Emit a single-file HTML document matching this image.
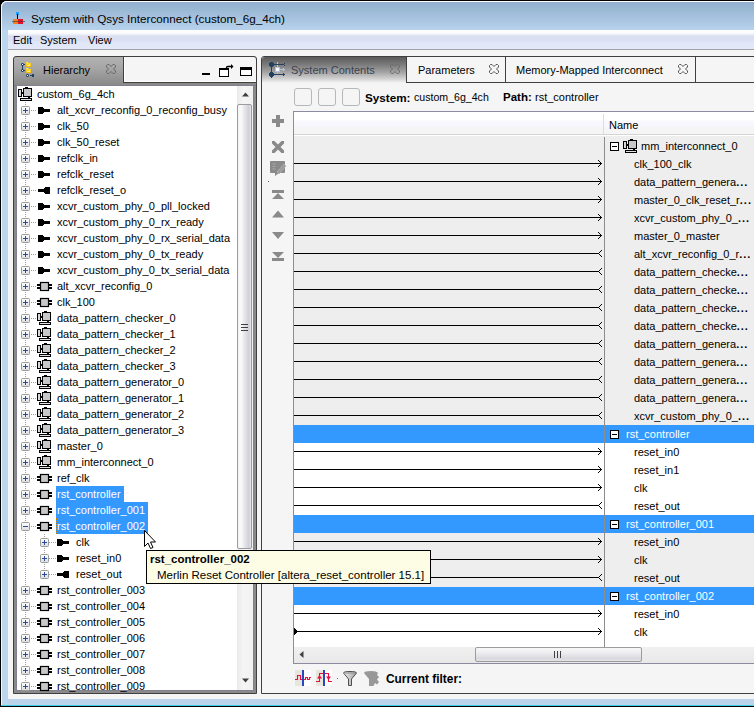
<!DOCTYPE html><html><head><meta charset="utf-8"><style>
*{margin:0;padding:0;box-sizing:border-box}
html,body{width:754px;height:707px;overflow:hidden;background:#f5f5f5;font-family:"Liberation Sans", sans-serif;font-size:11px;color:#000}
.a{position:absolute}
.t{position:absolute;white-space:nowrap;line-height:13px}
svg{position:absolute;overflow:visible}
</style></head><body><div class="a" style="left:0;top:0;width:754px;height:707px;background:#000"></div>
<div class="a" style="left:1px;top:1px;width:753px;height:705px;background:#bcd3ec;border-top-left-radius:6px"></div>
<div class="a" style="left:1px;top:1px;width:6px;height:705px;background:#bcd6ee;border-left:1px solid #f4f8fc;border-top-left-radius:6px"></div>
<div class="a" style="left:1px;top:1px;width:753px;height:29px;background:linear-gradient(#95afd3,#98b8d2 25%,#a2bedc 45%,#abc8e2 70%,#b4d0ea 95%);border-top-left-radius:6px;border-top:1px solid #fff;border-left:1px solid #f4f8fc"></div>
<div class="a" style="left:1px;top:705px;width:753px;height:1px;background:#3fd0e8"></div>
<svg style="left:12px;top:12px" width="14" height="14" viewBox="0 0 14 14">
<rect x="4" y="0" width="3" height="3" fill="#1aa0ff"/><rect x="5" y="2" width="1" height="6" fill="#000"/>
<rect x="1" y="7" width="5" height="5" fill="#f08020"/><rect x="6" y="7" width="5" height="5" fill="#e8102a"/>
<rect x="0" y="9" width="13" height="1" fill="#333" opacity=".6"/></svg>
<div class="t" style="left:31px;top:12px;font-size:11.7px">System with Qsys Interconnect (custom_6g_4ch)</div>
<div class="a" style="left:8px;top:30px;width:746px;height:20px;background:linear-gradient(#ffffff 0px,#fafbfd 3px,#e8ecf6 5px,#d9dff0 6px,#dbe0f2 11px,#e0e6f7 12px,#e3e9f8 19px);border-bottom:1px solid #a0a0a8"></div>
<div class="t" style="left:13px;top:34px">Edit</div>
<div class="t" style="left:40px;top:34px">System</div>
<div class="t" style="left:88px;top:34px">View</div>
<div class="a" style="left:8px;top:50px;width:746px;height:649px;background:#f5f5f5"></div>
<div class="a" style="left:13px;top:56px;width:244px;height:638px;background:#8a8a8a;border:1px solid #404040;border-radius:3px 3px 0 0"></div>
<div class="a" style="left:14px;top:57px;width:110px;height:28px;background:linear-gradient(#b2b2b2,#a6a6a6 40%,#979797 70%,#8a8a8a);border-top-left-radius:3px"></div>
<div class="a" style="left:123px;top:57px;width:133px;height:26px;background:#f5f5f5;border-left:1px solid #404040;border-bottom:1px solid #404040;border-top-right-radius:3px;box-shadow:inset 1px -1px 0 #fff"></div>
<div class="a" style="left:14px;top:85px;width:242px;height:1px;background:#7a7a90"></div>
<div class="t" style="left:43px;top:64px">Hierarchy</div>
<svg style="left:17px;top:59px" width="22" height="22" viewBox="0 0 22 22"><rect x="4" y="5" width="3" height="1" fill="#22405f"/><rect x="5" y="4" width="1" height="3" fill="#22405f"/><rect x="7" y="5" width="1" height="1" fill="#22405f"/><rect x="5" y="7" width="1" height="3" fill="#22405f"/><rect x="4" y="11" width="3" height="1" fill="#22405f"/><rect x="5" y="10" width="1" height="3" fill="#22405f"/><rect x="7" y="11" width="1" height="1" fill="#22405f"/><rect x="9" y="16" width="3" height="1" fill="#22405f"/><rect x="10" y="15" width="1" height="3" fill="#22405f"/><rect x="13" y="16" width="2" height="1" fill="#22405f"/><rect x="15" y="15" width="2" height="3" fill="#22405f"/><g opacity=".45"><rect x="4" y="4" width="1" height="1" fill="#22405f"/><rect x="6" y="4" width="1" height="1" fill="#22405f"/><rect x="4" y="6" width="1" height="1" fill="#22405f"/><rect x="6" y="6" width="1" height="1" fill="#22405f"/><rect x="4" y="10" width="1" height="1" fill="#22405f"/><rect x="6" y="10" width="1" height="1" fill="#22405f"/><rect x="4" y="12" width="1" height="1" fill="#22405f"/><rect x="6" y="12" width="1" height="1" fill="#22405f"/><rect x="9" y="15" width="1" height="1" fill="#22405f"/><rect x="11" y="15" width="1" height="1" fill="#22405f"/><rect x="9" y="17" width="1" height="1" fill="#22405f"/><rect x="11" y="17" width="1" height="1" fill="#22405f"/></g><rect x="5" y="5" width="1" height="1" fill="#fff"/><rect x="5" y="11" width="1" height="1" fill="#fff"/><rect x="10" y="16" width="1" height="1" fill="#fff"/><defs><linearGradient id="fy" x1="0" y1="0" x2="0" y2="1"><stop offset="0" stop-color="#ffe448"/><stop offset="1" stop-color="#f2b400"/></linearGradient></defs><path d="M9 3H11L12 4H14V8H9Z" fill="url(#fy)"/><path d="M9 9H11L12 10H14V14H9Z" fill="url(#fy)"/><rect x="10" y="6" width="3" height="1" fill="#ffec90"/><rect x="12" y="5" width="1" height="1" fill="#ffec90"/><rect x="10" y="12" width="3" height="1" fill="#ffec90"/><rect x="12" y="11" width="1" height="1" fill="#ffec90"/></svg>
<svg style="left:106px;top:64px" width="10" height="10" viewBox="0 0 10 10"><path d="M1.5 0.5H3L5 2.5L7 0.5H8.5L9.5 1.5V3L7.5 5L9.5 7V8.5L8.5 9.5H7L5 7.5L3 9.5H1.5L0.5 8.5V7L2.5 5L0.5 3V1.5Z" fill="none" stroke="#666" stroke-width="1"/></svg>
<div class="a" style="left:202px;top:73px;width:8px;height:2px;background:#000"></div>
<svg style="left:219px;top:63px" width="15" height="14" viewBox="0 0 15 14"><rect x="0.5" y="5.5" width="9" height="8" fill="#fff" stroke="#000"/><rect x="0" y="5" width="10" height="2" fill="#000"/><path d="M7.5 5V4.5Q7.5 3.5 9 3.5H12" stroke="#000" fill="none" stroke-width="1.3"/><path d="M12 1L14.5 3.5L12 6Z" fill="#000"/></svg>
<div class="a" style="left:240px;top:67px;width:12px;height:9px;border:1px solid #000;border-top:3px solid #000;background:#fff"></div>
<div class="a" style="left:16px;top:85px;width:238px;height:606px;border:1px solid #80808e"></div>
<div class="a" style="left:17px;top:86px;width:236px;height:604px;background:#fff"></div>
<div class="a" style="left:237px;top:86px;width:16px;height:604px;background:linear-gradient(90deg,#eaeaea,#f5f5f5 40%,#f0f0f0);"></div>
<svg style="left:242px;top:92px" width="7" height="5" viewBox="0 0 7 5"><path d="M0 4.5L3.5 0.5L7 4.5Z" fill="#404040"/></svg>
<svg style="left:242px;top:678px" width="7" height="5" viewBox="0 0 7 5"><path d="M0 0.5L3.5 4.5L7 0.5Z" fill="#404040"/></svg>
<div class="a" style="left:237px;top:104px;width:15px;height:445px;border:1px solid #9c9c9c;border-radius:2px;background:linear-gradient(90deg,#f5f5f5,#fafafa 25%,#e2e2e8 55%,#cfcfd8 85%,#e8e8ec)"></div>
<div class="a" style="left:241px;top:324px;width:7px;height:7px;background:repeating-linear-gradient(#404040 0 1px,transparent 1px 3px)"></div>
<div class="a" style="left:25px;top:102px;width:1px;height:588px;background:repeating-linear-gradient(#a0a0a0 0 1px,transparent 1px 2px)"></div>
<div class="a" style="left:44px;top:534px;width:1px;height:40px;background:repeating-linear-gradient(#a0a0a0 0 1px,transparent 1px 2px)"></div>
<svg style="left:18px;top:87px" width="14" height="14" viewBox="0 0 14 14"><rect x="0.5" y="2.5" width="3" height="7" fill="#d8d8d8" stroke="#000"/><rect x="4" y="5" width="1" height="2" fill="#000"/><rect x="5.5" y="1.5" width="8" height="8" fill="#c8c8c8" stroke="#000"/><rect x="7" y="0" width="3" height="1.5" fill="#000"/><rect x="10" y="10" width="2" height="1" fill="#000"/><rect x="2.5" y="11.5" width="11" height="2" fill="#e0e0e0" stroke="#000"/></svg>
<div class="t" style="left:37px;top:88px">custom_6g_4ch</div>
<div class="a" style="left:31px;top:110px;width:6px;height:1px;background:repeating-linear-gradient(90deg,#a0a0a0 0 1px,transparent 1px 2px)"></div>
<svg style="left:21px;top:106px" width="9" height="9" viewBox="0 0 9 9"><defs><linearGradient id="pg" x1="0" y1="0" x2="0" y2="1"><stop offset="0" stop-color="#fff"/><stop offset="1" stop-color="#dcdcdc"/></linearGradient></defs><rect x="0.5" y="0.5" width="8" height="8" rx="1" fill="url(#pg)" stroke="#9a9a9a"/><path d="M2 4.5H7" stroke="#2a4aa0"/><path d="M4.5 2V7" stroke="#2a4aa0"/></svg>
<svg style="left:38px;top:107px" width="12" height="7" viewBox="0 0 12 7"><rect x="0" y="0" width="5" height="7" fill="#000"/><rect x="5" y="1" width="1" height="5" fill="#000"/><rect x="6" y="2" width="6" height="3" fill="#000"/></svg>
<div class="t" style="left:57px;top:104px">alt_xcvr_reconfig_0_reconfig_busy</div>
<div class="a" style="left:31px;top:126px;width:6px;height:1px;background:repeating-linear-gradient(90deg,#a0a0a0 0 1px,transparent 1px 2px)"></div>
<svg style="left:21px;top:122px" width="9" height="9" viewBox="0 0 9 9"><defs><linearGradient id="pg" x1="0" y1="0" x2="0" y2="1"><stop offset="0" stop-color="#fff"/><stop offset="1" stop-color="#dcdcdc"/></linearGradient></defs><rect x="0.5" y="0.5" width="8" height="8" rx="1" fill="url(#pg)" stroke="#9a9a9a"/><path d="M2 4.5H7" stroke="#2a4aa0"/><path d="M4.5 2V7" stroke="#2a4aa0"/></svg>
<svg style="left:38px;top:123px" width="12" height="7" viewBox="0 0 12 7"><rect x="0" y="0" width="5" height="7" fill="#000"/><rect x="5" y="1" width="1" height="5" fill="#000"/><rect x="6" y="2" width="6" height="3" fill="#000"/></svg>
<div class="t" style="left:57px;top:120px">clk_50</div>
<div class="a" style="left:31px;top:142px;width:6px;height:1px;background:repeating-linear-gradient(90deg,#a0a0a0 0 1px,transparent 1px 2px)"></div>
<svg style="left:21px;top:138px" width="9" height="9" viewBox="0 0 9 9"><defs><linearGradient id="pg" x1="0" y1="0" x2="0" y2="1"><stop offset="0" stop-color="#fff"/><stop offset="1" stop-color="#dcdcdc"/></linearGradient></defs><rect x="0.5" y="0.5" width="8" height="8" rx="1" fill="url(#pg)" stroke="#9a9a9a"/><path d="M2 4.5H7" stroke="#2a4aa0"/><path d="M4.5 2V7" stroke="#2a4aa0"/></svg>
<svg style="left:38px;top:139px" width="12" height="7" viewBox="0 0 12 7"><rect x="0" y="0" width="5" height="7" fill="#000"/><rect x="5" y="1" width="1" height="5" fill="#000"/><rect x="6" y="2" width="6" height="3" fill="#000"/></svg>
<div class="t" style="left:57px;top:136px">clk_50_reset</div>
<div class="a" style="left:31px;top:158px;width:6px;height:1px;background:repeating-linear-gradient(90deg,#a0a0a0 0 1px,transparent 1px 2px)"></div>
<svg style="left:21px;top:154px" width="9" height="9" viewBox="0 0 9 9"><defs><linearGradient id="pg" x1="0" y1="0" x2="0" y2="1"><stop offset="0" stop-color="#fff"/><stop offset="1" stop-color="#dcdcdc"/></linearGradient></defs><rect x="0.5" y="0.5" width="8" height="8" rx="1" fill="url(#pg)" stroke="#9a9a9a"/><path d="M2 4.5H7" stroke="#2a4aa0"/><path d="M4.5 2V7" stroke="#2a4aa0"/></svg>
<svg style="left:38px;top:155px" width="12" height="7" viewBox="0 0 12 7"><rect x="0" y="0" width="5" height="7" fill="#000"/><rect x="5" y="1" width="1" height="5" fill="#000"/><rect x="6" y="2" width="6" height="3" fill="#000"/></svg>
<div class="t" style="left:57px;top:152px">refclk_in</div>
<div class="a" style="left:31px;top:174px;width:6px;height:1px;background:repeating-linear-gradient(90deg,#a0a0a0 0 1px,transparent 1px 2px)"></div>
<svg style="left:21px;top:170px" width="9" height="9" viewBox="0 0 9 9"><defs><linearGradient id="pg" x1="0" y1="0" x2="0" y2="1"><stop offset="0" stop-color="#fff"/><stop offset="1" stop-color="#dcdcdc"/></linearGradient></defs><rect x="0.5" y="0.5" width="8" height="8" rx="1" fill="url(#pg)" stroke="#9a9a9a"/><path d="M2 4.5H7" stroke="#2a4aa0"/><path d="M4.5 2V7" stroke="#2a4aa0"/></svg>
<svg style="left:38px;top:171px" width="12" height="7" viewBox="0 0 12 7"><rect x="0" y="0" width="5" height="7" fill="#000"/><rect x="5" y="1" width="1" height="5" fill="#000"/><rect x="6" y="2" width="6" height="3" fill="#000"/></svg>
<div class="t" style="left:57px;top:168px">refclk_reset</div>
<div class="a" style="left:31px;top:190px;width:6px;height:1px;background:repeating-linear-gradient(90deg,#a0a0a0 0 1px,transparent 1px 2px)"></div>
<svg style="left:21px;top:186px" width="9" height="9" viewBox="0 0 9 9"><defs><linearGradient id="pg" x1="0" y1="0" x2="0" y2="1"><stop offset="0" stop-color="#fff"/><stop offset="1" stop-color="#dcdcdc"/></linearGradient></defs><rect x="0.5" y="0.5" width="8" height="8" rx="1" fill="url(#pg)" stroke="#9a9a9a"/><path d="M2 4.5H7" stroke="#2a4aa0"/><path d="M4.5 2V7" stroke="#2a4aa0"/></svg>
<svg style="left:38px;top:187px" width="12" height="7" viewBox="0 0 12 7"><rect x="7" y="0" width="5" height="7" fill="#000"/><rect x="6" y="1" width="1" height="5" fill="#000"/><rect x="0" y="2" width="6" height="3" fill="#000"/></svg>
<div class="t" style="left:57px;top:184px">refclk_reset_o</div>
<div class="a" style="left:31px;top:206px;width:6px;height:1px;background:repeating-linear-gradient(90deg,#a0a0a0 0 1px,transparent 1px 2px)"></div>
<svg style="left:21px;top:202px" width="9" height="9" viewBox="0 0 9 9"><defs><linearGradient id="pg" x1="0" y1="0" x2="0" y2="1"><stop offset="0" stop-color="#fff"/><stop offset="1" stop-color="#dcdcdc"/></linearGradient></defs><rect x="0.5" y="0.5" width="8" height="8" rx="1" fill="url(#pg)" stroke="#9a9a9a"/><path d="M2 4.5H7" stroke="#2a4aa0"/><path d="M4.5 2V7" stroke="#2a4aa0"/></svg>
<svg style="left:38px;top:203px" width="12" height="7" viewBox="0 0 12 7"><rect x="0" y="0" width="5" height="7" fill="#000"/><rect x="5" y="1" width="1" height="5" fill="#000"/><rect x="6" y="2" width="6" height="3" fill="#000"/></svg>
<div class="t" style="left:57px;top:200px">xcvr_custom_phy_0_pll_locked</div>
<div class="a" style="left:31px;top:222px;width:6px;height:1px;background:repeating-linear-gradient(90deg,#a0a0a0 0 1px,transparent 1px 2px)"></div>
<svg style="left:21px;top:218px" width="9" height="9" viewBox="0 0 9 9"><defs><linearGradient id="pg" x1="0" y1="0" x2="0" y2="1"><stop offset="0" stop-color="#fff"/><stop offset="1" stop-color="#dcdcdc"/></linearGradient></defs><rect x="0.5" y="0.5" width="8" height="8" rx="1" fill="url(#pg)" stroke="#9a9a9a"/><path d="M2 4.5H7" stroke="#2a4aa0"/><path d="M4.5 2V7" stroke="#2a4aa0"/></svg>
<svg style="left:38px;top:219px" width="12" height="7" viewBox="0 0 12 7"><rect x="0" y="0" width="5" height="7" fill="#000"/><rect x="5" y="1" width="1" height="5" fill="#000"/><rect x="6" y="2" width="6" height="3" fill="#000"/></svg>
<div class="t" style="left:57px;top:216px">xcvr_custom_phy_0_rx_ready</div>
<div class="a" style="left:31px;top:238px;width:6px;height:1px;background:repeating-linear-gradient(90deg,#a0a0a0 0 1px,transparent 1px 2px)"></div>
<svg style="left:21px;top:234px" width="9" height="9" viewBox="0 0 9 9"><defs><linearGradient id="pg" x1="0" y1="0" x2="0" y2="1"><stop offset="0" stop-color="#fff"/><stop offset="1" stop-color="#dcdcdc"/></linearGradient></defs><rect x="0.5" y="0.5" width="8" height="8" rx="1" fill="url(#pg)" stroke="#9a9a9a"/><path d="M2 4.5H7" stroke="#2a4aa0"/><path d="M4.5 2V7" stroke="#2a4aa0"/></svg>
<svg style="left:38px;top:235px" width="12" height="7" viewBox="0 0 12 7"><rect x="0" y="0" width="5" height="7" fill="#000"/><rect x="5" y="1" width="1" height="5" fill="#000"/><rect x="6" y="2" width="6" height="3" fill="#000"/></svg>
<div class="t" style="left:57px;top:232px">xcvr_custom_phy_0_rx_serial_data</div>
<div class="a" style="left:31px;top:254px;width:6px;height:1px;background:repeating-linear-gradient(90deg,#a0a0a0 0 1px,transparent 1px 2px)"></div>
<svg style="left:21px;top:250px" width="9" height="9" viewBox="0 0 9 9"><defs><linearGradient id="pg" x1="0" y1="0" x2="0" y2="1"><stop offset="0" stop-color="#fff"/><stop offset="1" stop-color="#dcdcdc"/></linearGradient></defs><rect x="0.5" y="0.5" width="8" height="8" rx="1" fill="url(#pg)" stroke="#9a9a9a"/><path d="M2 4.5H7" stroke="#2a4aa0"/><path d="M4.5 2V7" stroke="#2a4aa0"/></svg>
<svg style="left:38px;top:251px" width="12" height="7" viewBox="0 0 12 7"><rect x="0" y="0" width="5" height="7" fill="#000"/><rect x="5" y="1" width="1" height="5" fill="#000"/><rect x="6" y="2" width="6" height="3" fill="#000"/></svg>
<div class="t" style="left:57px;top:248px">xcvr_custom_phy_0_tx_ready</div>
<div class="a" style="left:31px;top:270px;width:6px;height:1px;background:repeating-linear-gradient(90deg,#a0a0a0 0 1px,transparent 1px 2px)"></div>
<svg style="left:21px;top:266px" width="9" height="9" viewBox="0 0 9 9"><defs><linearGradient id="pg" x1="0" y1="0" x2="0" y2="1"><stop offset="0" stop-color="#fff"/><stop offset="1" stop-color="#dcdcdc"/></linearGradient></defs><rect x="0.5" y="0.5" width="8" height="8" rx="1" fill="url(#pg)" stroke="#9a9a9a"/><path d="M2 4.5H7" stroke="#2a4aa0"/><path d="M4.5 2V7" stroke="#2a4aa0"/></svg>
<svg style="left:38px;top:267px" width="12" height="7" viewBox="0 0 12 7"><rect x="0" y="0" width="5" height="7" fill="#000"/><rect x="5" y="1" width="1" height="5" fill="#000"/><rect x="6" y="2" width="6" height="3" fill="#000"/></svg>
<div class="t" style="left:57px;top:264px">xcvr_custom_phy_0_tx_serial_data</div>
<div class="a" style="left:31px;top:286px;width:6px;height:1px;background:repeating-linear-gradient(90deg,#a0a0a0 0 1px,transparent 1px 2px)"></div>
<svg style="left:21px;top:282px" width="9" height="9" viewBox="0 0 9 9"><defs><linearGradient id="pg" x1="0" y1="0" x2="0" y2="1"><stop offset="0" stop-color="#fff"/><stop offset="1" stop-color="#dcdcdc"/></linearGradient></defs><rect x="0.5" y="0.5" width="8" height="8" rx="1" fill="url(#pg)" stroke="#9a9a9a"/><path d="M2 4.5H7" stroke="#2a4aa0"/><path d="M4.5 2V7" stroke="#2a4aa0"/></svg>
<svg style="left:37px;top:282px" width="15" height="9" viewBox="0 0 15 9"><rect x="3.5" y="0.5" width="8" height="8" fill="#c8c8c8" stroke="#000" stroke-width="1.2"/><rect x="0" y="2" width="3" height="2" fill="#000"/><rect x="0" y="5" width="3" height="2" fill="#000"/><rect x="12" y="2" width="3" height="2" fill="#000"/><rect x="12" y="5" width="3" height="2" fill="#000"/></svg>
<div class="t" style="left:57px;top:280px">alt_xcvr_reconfig_0</div>
<div class="a" style="left:31px;top:302px;width:6px;height:1px;background:repeating-linear-gradient(90deg,#a0a0a0 0 1px,transparent 1px 2px)"></div>
<svg style="left:21px;top:298px" width="9" height="9" viewBox="0 0 9 9"><defs><linearGradient id="pg" x1="0" y1="0" x2="0" y2="1"><stop offset="0" stop-color="#fff"/><stop offset="1" stop-color="#dcdcdc"/></linearGradient></defs><rect x="0.5" y="0.5" width="8" height="8" rx="1" fill="url(#pg)" stroke="#9a9a9a"/><path d="M2 4.5H7" stroke="#2a4aa0"/><path d="M4.5 2V7" stroke="#2a4aa0"/></svg>
<svg style="left:37px;top:298px" width="15" height="9" viewBox="0 0 15 9"><rect x="3.5" y="0.5" width="8" height="8" fill="#c8c8c8" stroke="#000" stroke-width="1.2"/><rect x="0" y="2" width="3" height="2" fill="#000"/><rect x="0" y="5" width="3" height="2" fill="#000"/><rect x="12" y="2" width="3" height="2" fill="#000"/><rect x="12" y="5" width="3" height="2" fill="#000"/></svg>
<div class="t" style="left:57px;top:296px">clk_100</div>
<div class="a" style="left:31px;top:318px;width:6px;height:1px;background:repeating-linear-gradient(90deg,#a0a0a0 0 1px,transparent 1px 2px)"></div>
<svg style="left:21px;top:314px" width="9" height="9" viewBox="0 0 9 9"><defs><linearGradient id="pg" x1="0" y1="0" x2="0" y2="1"><stop offset="0" stop-color="#fff"/><stop offset="1" stop-color="#dcdcdc"/></linearGradient></defs><rect x="0.5" y="0.5" width="8" height="8" rx="1" fill="url(#pg)" stroke="#9a9a9a"/><path d="M2 4.5H7" stroke="#2a4aa0"/><path d="M4.5 2V7" stroke="#2a4aa0"/></svg>
<svg style="left:37px;top:311px" width="14" height="14" viewBox="0 0 14 14"><rect x="0.5" y="2.5" width="3" height="7" fill="#d8d8d8" stroke="#000"/><rect x="4" y="5" width="1" height="2" fill="#000"/><rect x="5.5" y="1.5" width="8" height="8" fill="#c8c8c8" stroke="#000"/><rect x="7" y="0" width="3" height="1.5" fill="#000"/><rect x="10" y="10" width="2" height="1" fill="#000"/><rect x="2.5" y="11.5" width="11" height="2" fill="#e0e0e0" stroke="#000"/></svg>
<div class="t" style="left:57px;top:312px">data_pattern_checker_0</div>
<div class="a" style="left:31px;top:334px;width:6px;height:1px;background:repeating-linear-gradient(90deg,#a0a0a0 0 1px,transparent 1px 2px)"></div>
<svg style="left:21px;top:330px" width="9" height="9" viewBox="0 0 9 9"><defs><linearGradient id="pg" x1="0" y1="0" x2="0" y2="1"><stop offset="0" stop-color="#fff"/><stop offset="1" stop-color="#dcdcdc"/></linearGradient></defs><rect x="0.5" y="0.5" width="8" height="8" rx="1" fill="url(#pg)" stroke="#9a9a9a"/><path d="M2 4.5H7" stroke="#2a4aa0"/><path d="M4.5 2V7" stroke="#2a4aa0"/></svg>
<svg style="left:37px;top:327px" width="14" height="14" viewBox="0 0 14 14"><rect x="0.5" y="2.5" width="3" height="7" fill="#d8d8d8" stroke="#000"/><rect x="4" y="5" width="1" height="2" fill="#000"/><rect x="5.5" y="1.5" width="8" height="8" fill="#c8c8c8" stroke="#000"/><rect x="7" y="0" width="3" height="1.5" fill="#000"/><rect x="10" y="10" width="2" height="1" fill="#000"/><rect x="2.5" y="11.5" width="11" height="2" fill="#e0e0e0" stroke="#000"/></svg>
<div class="t" style="left:57px;top:328px">data_pattern_checker_1</div>
<div class="a" style="left:31px;top:350px;width:6px;height:1px;background:repeating-linear-gradient(90deg,#a0a0a0 0 1px,transparent 1px 2px)"></div>
<svg style="left:21px;top:346px" width="9" height="9" viewBox="0 0 9 9"><defs><linearGradient id="pg" x1="0" y1="0" x2="0" y2="1"><stop offset="0" stop-color="#fff"/><stop offset="1" stop-color="#dcdcdc"/></linearGradient></defs><rect x="0.5" y="0.5" width="8" height="8" rx="1" fill="url(#pg)" stroke="#9a9a9a"/><path d="M2 4.5H7" stroke="#2a4aa0"/><path d="M4.5 2V7" stroke="#2a4aa0"/></svg>
<svg style="left:37px;top:343px" width="14" height="14" viewBox="0 0 14 14"><rect x="0.5" y="2.5" width="3" height="7" fill="#d8d8d8" stroke="#000"/><rect x="4" y="5" width="1" height="2" fill="#000"/><rect x="5.5" y="1.5" width="8" height="8" fill="#c8c8c8" stroke="#000"/><rect x="7" y="0" width="3" height="1.5" fill="#000"/><rect x="10" y="10" width="2" height="1" fill="#000"/><rect x="2.5" y="11.5" width="11" height="2" fill="#e0e0e0" stroke="#000"/></svg>
<div class="t" style="left:57px;top:344px">data_pattern_checker_2</div>
<div class="a" style="left:31px;top:366px;width:6px;height:1px;background:repeating-linear-gradient(90deg,#a0a0a0 0 1px,transparent 1px 2px)"></div>
<svg style="left:21px;top:362px" width="9" height="9" viewBox="0 0 9 9"><defs><linearGradient id="pg" x1="0" y1="0" x2="0" y2="1"><stop offset="0" stop-color="#fff"/><stop offset="1" stop-color="#dcdcdc"/></linearGradient></defs><rect x="0.5" y="0.5" width="8" height="8" rx="1" fill="url(#pg)" stroke="#9a9a9a"/><path d="M2 4.5H7" stroke="#2a4aa0"/><path d="M4.5 2V7" stroke="#2a4aa0"/></svg>
<svg style="left:37px;top:359px" width="14" height="14" viewBox="0 0 14 14"><rect x="0.5" y="2.5" width="3" height="7" fill="#d8d8d8" stroke="#000"/><rect x="4" y="5" width="1" height="2" fill="#000"/><rect x="5.5" y="1.5" width="8" height="8" fill="#c8c8c8" stroke="#000"/><rect x="7" y="0" width="3" height="1.5" fill="#000"/><rect x="10" y="10" width="2" height="1" fill="#000"/><rect x="2.5" y="11.5" width="11" height="2" fill="#e0e0e0" stroke="#000"/></svg>
<div class="t" style="left:57px;top:360px">data_pattern_checker_3</div>
<div class="a" style="left:31px;top:382px;width:6px;height:1px;background:repeating-linear-gradient(90deg,#a0a0a0 0 1px,transparent 1px 2px)"></div>
<svg style="left:21px;top:378px" width="9" height="9" viewBox="0 0 9 9"><defs><linearGradient id="pg" x1="0" y1="0" x2="0" y2="1"><stop offset="0" stop-color="#fff"/><stop offset="1" stop-color="#dcdcdc"/></linearGradient></defs><rect x="0.5" y="0.5" width="8" height="8" rx="1" fill="url(#pg)" stroke="#9a9a9a"/><path d="M2 4.5H7" stroke="#2a4aa0"/><path d="M4.5 2V7" stroke="#2a4aa0"/></svg>
<svg style="left:37px;top:375px" width="14" height="14" viewBox="0 0 14 14"><rect x="0.5" y="2.5" width="3" height="7" fill="#d8d8d8" stroke="#000"/><rect x="4" y="5" width="1" height="2" fill="#000"/><rect x="5.5" y="1.5" width="8" height="8" fill="#c8c8c8" stroke="#000"/><rect x="7" y="0" width="3" height="1.5" fill="#000"/><rect x="10" y="10" width="2" height="1" fill="#000"/><rect x="2.5" y="11.5" width="11" height="2" fill="#e0e0e0" stroke="#000"/></svg>
<div class="t" style="left:57px;top:376px">data_pattern_generator_0</div>
<div class="a" style="left:31px;top:398px;width:6px;height:1px;background:repeating-linear-gradient(90deg,#a0a0a0 0 1px,transparent 1px 2px)"></div>
<svg style="left:21px;top:394px" width="9" height="9" viewBox="0 0 9 9"><defs><linearGradient id="pg" x1="0" y1="0" x2="0" y2="1"><stop offset="0" stop-color="#fff"/><stop offset="1" stop-color="#dcdcdc"/></linearGradient></defs><rect x="0.5" y="0.5" width="8" height="8" rx="1" fill="url(#pg)" stroke="#9a9a9a"/><path d="M2 4.5H7" stroke="#2a4aa0"/><path d="M4.5 2V7" stroke="#2a4aa0"/></svg>
<svg style="left:37px;top:391px" width="14" height="14" viewBox="0 0 14 14"><rect x="0.5" y="2.5" width="3" height="7" fill="#d8d8d8" stroke="#000"/><rect x="4" y="5" width="1" height="2" fill="#000"/><rect x="5.5" y="1.5" width="8" height="8" fill="#c8c8c8" stroke="#000"/><rect x="7" y="0" width="3" height="1.5" fill="#000"/><rect x="10" y="10" width="2" height="1" fill="#000"/><rect x="2.5" y="11.5" width="11" height="2" fill="#e0e0e0" stroke="#000"/></svg>
<div class="t" style="left:57px;top:392px">data_pattern_generator_1</div>
<div class="a" style="left:31px;top:414px;width:6px;height:1px;background:repeating-linear-gradient(90deg,#a0a0a0 0 1px,transparent 1px 2px)"></div>
<svg style="left:21px;top:410px" width="9" height="9" viewBox="0 0 9 9"><defs><linearGradient id="pg" x1="0" y1="0" x2="0" y2="1"><stop offset="0" stop-color="#fff"/><stop offset="1" stop-color="#dcdcdc"/></linearGradient></defs><rect x="0.5" y="0.5" width="8" height="8" rx="1" fill="url(#pg)" stroke="#9a9a9a"/><path d="M2 4.5H7" stroke="#2a4aa0"/><path d="M4.5 2V7" stroke="#2a4aa0"/></svg>
<svg style="left:37px;top:407px" width="14" height="14" viewBox="0 0 14 14"><rect x="0.5" y="2.5" width="3" height="7" fill="#d8d8d8" stroke="#000"/><rect x="4" y="5" width="1" height="2" fill="#000"/><rect x="5.5" y="1.5" width="8" height="8" fill="#c8c8c8" stroke="#000"/><rect x="7" y="0" width="3" height="1.5" fill="#000"/><rect x="10" y="10" width="2" height="1" fill="#000"/><rect x="2.5" y="11.5" width="11" height="2" fill="#e0e0e0" stroke="#000"/></svg>
<div class="t" style="left:57px;top:408px">data_pattern_generator_2</div>
<div class="a" style="left:31px;top:430px;width:6px;height:1px;background:repeating-linear-gradient(90deg,#a0a0a0 0 1px,transparent 1px 2px)"></div>
<svg style="left:21px;top:426px" width="9" height="9" viewBox="0 0 9 9"><defs><linearGradient id="pg" x1="0" y1="0" x2="0" y2="1"><stop offset="0" stop-color="#fff"/><stop offset="1" stop-color="#dcdcdc"/></linearGradient></defs><rect x="0.5" y="0.5" width="8" height="8" rx="1" fill="url(#pg)" stroke="#9a9a9a"/><path d="M2 4.5H7" stroke="#2a4aa0"/><path d="M4.5 2V7" stroke="#2a4aa0"/></svg>
<svg style="left:37px;top:423px" width="14" height="14" viewBox="0 0 14 14"><rect x="0.5" y="2.5" width="3" height="7" fill="#d8d8d8" stroke="#000"/><rect x="4" y="5" width="1" height="2" fill="#000"/><rect x="5.5" y="1.5" width="8" height="8" fill="#c8c8c8" stroke="#000"/><rect x="7" y="0" width="3" height="1.5" fill="#000"/><rect x="10" y="10" width="2" height="1" fill="#000"/><rect x="2.5" y="11.5" width="11" height="2" fill="#e0e0e0" stroke="#000"/></svg>
<div class="t" style="left:57px;top:424px">data_pattern_generator_3</div>
<div class="a" style="left:31px;top:446px;width:6px;height:1px;background:repeating-linear-gradient(90deg,#a0a0a0 0 1px,transparent 1px 2px)"></div>
<svg style="left:21px;top:442px" width="9" height="9" viewBox="0 0 9 9"><defs><linearGradient id="pg" x1="0" y1="0" x2="0" y2="1"><stop offset="0" stop-color="#fff"/><stop offset="1" stop-color="#dcdcdc"/></linearGradient></defs><rect x="0.5" y="0.5" width="8" height="8" rx="1" fill="url(#pg)" stroke="#9a9a9a"/><path d="M2 4.5H7" stroke="#2a4aa0"/><path d="M4.5 2V7" stroke="#2a4aa0"/></svg>
<svg style="left:37px;top:439px" width="14" height="14" viewBox="0 0 14 14"><rect x="0.5" y="2.5" width="3" height="7" fill="#d8d8d8" stroke="#000"/><rect x="4" y="5" width="1" height="2" fill="#000"/><rect x="5.5" y="1.5" width="8" height="8" fill="#c8c8c8" stroke="#000"/><rect x="7" y="0" width="3" height="1.5" fill="#000"/><rect x="10" y="10" width="2" height="1" fill="#000"/><rect x="2.5" y="11.5" width="11" height="2" fill="#e0e0e0" stroke="#000"/></svg>
<div class="t" style="left:57px;top:440px">master_0</div>
<div class="a" style="left:31px;top:462px;width:6px;height:1px;background:repeating-linear-gradient(90deg,#a0a0a0 0 1px,transparent 1px 2px)"></div>
<svg style="left:21px;top:458px" width="9" height="9" viewBox="0 0 9 9"><defs><linearGradient id="pg" x1="0" y1="0" x2="0" y2="1"><stop offset="0" stop-color="#fff"/><stop offset="1" stop-color="#dcdcdc"/></linearGradient></defs><rect x="0.5" y="0.5" width="8" height="8" rx="1" fill="url(#pg)" stroke="#9a9a9a"/><path d="M2 4.5H7" stroke="#2a4aa0"/><path d="M4.5 2V7" stroke="#2a4aa0"/></svg>
<svg style="left:37px;top:455px" width="14" height="14" viewBox="0 0 14 14"><rect x="0.5" y="2.5" width="3" height="7" fill="#d8d8d8" stroke="#000"/><rect x="4" y="5" width="1" height="2" fill="#000"/><rect x="5.5" y="1.5" width="8" height="8" fill="#c8c8c8" stroke="#000"/><rect x="7" y="0" width="3" height="1.5" fill="#000"/><rect x="10" y="10" width="2" height="1" fill="#000"/><rect x="2.5" y="11.5" width="11" height="2" fill="#e0e0e0" stroke="#000"/></svg>
<div class="t" style="left:57px;top:456px">mm_interconnect_0</div>
<div class="a" style="left:31px;top:478px;width:6px;height:1px;background:repeating-linear-gradient(90deg,#a0a0a0 0 1px,transparent 1px 2px)"></div>
<svg style="left:21px;top:474px" width="9" height="9" viewBox="0 0 9 9"><defs><linearGradient id="pg" x1="0" y1="0" x2="0" y2="1"><stop offset="0" stop-color="#fff"/><stop offset="1" stop-color="#dcdcdc"/></linearGradient></defs><rect x="0.5" y="0.5" width="8" height="8" rx="1" fill="url(#pg)" stroke="#9a9a9a"/><path d="M2 4.5H7" stroke="#2a4aa0"/><path d="M4.5 2V7" stroke="#2a4aa0"/></svg>
<svg style="left:37px;top:474px" width="15" height="9" viewBox="0 0 15 9"><rect x="3.5" y="0.5" width="8" height="8" fill="#c8c8c8" stroke="#000" stroke-width="1.2"/><rect x="0" y="2" width="3" height="2" fill="#000"/><rect x="0" y="5" width="3" height="2" fill="#000"/><rect x="12" y="2" width="3" height="2" fill="#000"/><rect x="12" y="5" width="3" height="2" fill="#000"/></svg>
<div class="t" style="left:57px;top:472px">ref_clk</div>
<div class="a" style="left:31px;top:494px;width:6px;height:1px;background:repeating-linear-gradient(90deg,#a0a0a0 0 1px,transparent 1px 2px)"></div>
<svg style="left:21px;top:490px" width="9" height="9" viewBox="0 0 9 9"><defs><linearGradient id="pg" x1="0" y1="0" x2="0" y2="1"><stop offset="0" stop-color="#fff"/><stop offset="1" stop-color="#dcdcdc"/></linearGradient></defs><rect x="0.5" y="0.5" width="8" height="8" rx="1" fill="url(#pg)" stroke="#9a9a9a"/><path d="M2 4.5H7" stroke="#2a4aa0"/><path d="M4.5 2V7" stroke="#2a4aa0"/></svg>
<svg style="left:37px;top:490px" width="15" height="9" viewBox="0 0 15 9"><rect x="3.5" y="0.5" width="8" height="8" fill="#c8c8c8" stroke="#000" stroke-width="1.2"/><rect x="0" y="2" width="3" height="2" fill="#000"/><rect x="0" y="5" width="3" height="2" fill="#000"/><rect x="12" y="2" width="3" height="2" fill="#000"/><rect x="12" y="5" width="3" height="2" fill="#000"/></svg>
<div class="a" style="left:56px;top:486px;width:68px;height:16px;background:#3399ff;"></div>
<div class="t" style="left:57px;top:488px;color:#fff">rst_controller</div>
<div class="a" style="left:31px;top:510px;width:6px;height:1px;background:repeating-linear-gradient(90deg,#a0a0a0 0 1px,transparent 1px 2px)"></div>
<svg style="left:21px;top:506px" width="9" height="9" viewBox="0 0 9 9"><defs><linearGradient id="pg" x1="0" y1="0" x2="0" y2="1"><stop offset="0" stop-color="#fff"/><stop offset="1" stop-color="#dcdcdc"/></linearGradient></defs><rect x="0.5" y="0.5" width="8" height="8" rx="1" fill="url(#pg)" stroke="#9a9a9a"/><path d="M2 4.5H7" stroke="#2a4aa0"/><path d="M4.5 2V7" stroke="#2a4aa0"/></svg>
<svg style="left:37px;top:506px" width="15" height="9" viewBox="0 0 15 9"><rect x="3.5" y="0.5" width="8" height="8" fill="#c8c8c8" stroke="#000" stroke-width="1.2"/><rect x="0" y="2" width="3" height="2" fill="#000"/><rect x="0" y="5" width="3" height="2" fill="#000"/><rect x="12" y="2" width="3" height="2" fill="#000"/><rect x="12" y="5" width="3" height="2" fill="#000"/></svg>
<div class="a" style="left:56px;top:502px;width:92px;height:16px;background:#3399ff;"></div>
<div class="t" style="left:57px;top:504px;color:#fff">rst_controller_001</div>
<div class="a" style="left:31px;top:526px;width:6px;height:1px;background:repeating-linear-gradient(90deg,#a0a0a0 0 1px,transparent 1px 2px)"></div>
<svg style="left:21px;top:522px" width="9" height="9" viewBox="0 0 9 9"><defs><linearGradient id="pg" x1="0" y1="0" x2="0" y2="1"><stop offset="0" stop-color="#fff"/><stop offset="1" stop-color="#dcdcdc"/></linearGradient></defs><rect x="0.5" y="0.5" width="8" height="8" rx="1" fill="url(#pg)" stroke="#9a9a9a"/><path d="M2 4.5H7" stroke="#2a4aa0"/></svg>
<svg style="left:37px;top:522px" width="15" height="9" viewBox="0 0 15 9"><rect x="3.5" y="0.5" width="8" height="8" fill="#c8c8c8" stroke="#000" stroke-width="1.2"/><rect x="0" y="2" width="3" height="2" fill="#000"/><rect x="0" y="5" width="3" height="2" fill="#000"/><rect x="12" y="2" width="3" height="2" fill="#000"/><rect x="12" y="5" width="3" height="2" fill="#000"/></svg>
<div class="a" style="left:56px;top:518px;width:92px;height:16px;background:#3399ff;border:1px dotted #c08000;"></div>
<div class="t" style="left:57px;top:520px;color:#fff">rst_controller_002</div>
<div class="a" style="left:49px;top:542px;width:7px;height:1px;background:repeating-linear-gradient(90deg,#a0a0a0 0 1px,transparent 1px 2px)"></div>
<svg style="left:40px;top:538px" width="9" height="9" viewBox="0 0 9 9"><defs><linearGradient id="pg" x1="0" y1="0" x2="0" y2="1"><stop offset="0" stop-color="#fff"/><stop offset="1" stop-color="#dcdcdc"/></linearGradient></defs><rect x="0.5" y="0.5" width="8" height="8" rx="1" fill="url(#pg)" stroke="#9a9a9a"/><path d="M2 4.5H7" stroke="#2a4aa0"/><path d="M4.5 2V7" stroke="#2a4aa0"/></svg>
<svg style="left:57px;top:539px" width="12" height="7" viewBox="0 0 12 7"><rect x="0" y="0" width="5" height="7" fill="#000"/><rect x="5" y="1" width="1" height="5" fill="#000"/><rect x="6" y="2" width="6" height="3" fill="#000"/></svg>
<div class="t" style="left:76px;top:536px">clk</div>
<div class="a" style="left:49px;top:558px;width:7px;height:1px;background:repeating-linear-gradient(90deg,#a0a0a0 0 1px,transparent 1px 2px)"></div>
<svg style="left:40px;top:554px" width="9" height="9" viewBox="0 0 9 9"><defs><linearGradient id="pg" x1="0" y1="0" x2="0" y2="1"><stop offset="0" stop-color="#fff"/><stop offset="1" stop-color="#dcdcdc"/></linearGradient></defs><rect x="0.5" y="0.5" width="8" height="8" rx="1" fill="url(#pg)" stroke="#9a9a9a"/><path d="M2 4.5H7" stroke="#2a4aa0"/><path d="M4.5 2V7" stroke="#2a4aa0"/></svg>
<svg style="left:57px;top:555px" width="12" height="7" viewBox="0 0 12 7"><rect x="0" y="0" width="5" height="7" fill="#000"/><rect x="5" y="1" width="1" height="5" fill="#000"/><rect x="6" y="2" width="6" height="3" fill="#000"/></svg>
<div class="t" style="left:76px;top:552px">reset_in0</div>
<div class="a" style="left:49px;top:574px;width:7px;height:1px;background:repeating-linear-gradient(90deg,#a0a0a0 0 1px,transparent 1px 2px)"></div>
<svg style="left:40px;top:570px" width="9" height="9" viewBox="0 0 9 9"><defs><linearGradient id="pg" x1="0" y1="0" x2="0" y2="1"><stop offset="0" stop-color="#fff"/><stop offset="1" stop-color="#dcdcdc"/></linearGradient></defs><rect x="0.5" y="0.5" width="8" height="8" rx="1" fill="url(#pg)" stroke="#9a9a9a"/><path d="M2 4.5H7" stroke="#2a4aa0"/><path d="M4.5 2V7" stroke="#2a4aa0"/></svg>
<svg style="left:57px;top:571px" width="12" height="7" viewBox="0 0 12 7"><rect x="7" y="0" width="5" height="7" fill="#000"/><rect x="6" y="1" width="1" height="5" fill="#000"/><rect x="0" y="2" width="6" height="3" fill="#000"/></svg>
<div class="t" style="left:76px;top:568px">reset_out</div>
<div class="a" style="left:31px;top:590px;width:6px;height:1px;background:repeating-linear-gradient(90deg,#a0a0a0 0 1px,transparent 1px 2px)"></div>
<svg style="left:21px;top:586px" width="9" height="9" viewBox="0 0 9 9"><defs><linearGradient id="pg" x1="0" y1="0" x2="0" y2="1"><stop offset="0" stop-color="#fff"/><stop offset="1" stop-color="#dcdcdc"/></linearGradient></defs><rect x="0.5" y="0.5" width="8" height="8" rx="1" fill="url(#pg)" stroke="#9a9a9a"/><path d="M2 4.5H7" stroke="#2a4aa0"/><path d="M4.5 2V7" stroke="#2a4aa0"/></svg>
<svg style="left:37px;top:586px" width="15" height="9" viewBox="0 0 15 9"><rect x="3.5" y="0.5" width="8" height="8" fill="#c8c8c8" stroke="#000" stroke-width="1.2"/><rect x="0" y="2" width="3" height="2" fill="#000"/><rect x="0" y="5" width="3" height="2" fill="#000"/><rect x="12" y="2" width="3" height="2" fill="#000"/><rect x="12" y="5" width="3" height="2" fill="#000"/></svg>
<div class="t" style="left:57px;top:584px">rst_controller_003</div>
<div class="a" style="left:31px;top:606px;width:6px;height:1px;background:repeating-linear-gradient(90deg,#a0a0a0 0 1px,transparent 1px 2px)"></div>
<svg style="left:21px;top:602px" width="9" height="9" viewBox="0 0 9 9"><defs><linearGradient id="pg" x1="0" y1="0" x2="0" y2="1"><stop offset="0" stop-color="#fff"/><stop offset="1" stop-color="#dcdcdc"/></linearGradient></defs><rect x="0.5" y="0.5" width="8" height="8" rx="1" fill="url(#pg)" stroke="#9a9a9a"/><path d="M2 4.5H7" stroke="#2a4aa0"/><path d="M4.5 2V7" stroke="#2a4aa0"/></svg>
<svg style="left:37px;top:602px" width="15" height="9" viewBox="0 0 15 9"><rect x="3.5" y="0.5" width="8" height="8" fill="#c8c8c8" stroke="#000" stroke-width="1.2"/><rect x="0" y="2" width="3" height="2" fill="#000"/><rect x="0" y="5" width="3" height="2" fill="#000"/><rect x="12" y="2" width="3" height="2" fill="#000"/><rect x="12" y="5" width="3" height="2" fill="#000"/></svg>
<div class="t" style="left:57px;top:600px">rst_controller_004</div>
<div class="a" style="left:31px;top:622px;width:6px;height:1px;background:repeating-linear-gradient(90deg,#a0a0a0 0 1px,transparent 1px 2px)"></div>
<svg style="left:21px;top:618px" width="9" height="9" viewBox="0 0 9 9"><defs><linearGradient id="pg" x1="0" y1="0" x2="0" y2="1"><stop offset="0" stop-color="#fff"/><stop offset="1" stop-color="#dcdcdc"/></linearGradient></defs><rect x="0.5" y="0.5" width="8" height="8" rx="1" fill="url(#pg)" stroke="#9a9a9a"/><path d="M2 4.5H7" stroke="#2a4aa0"/><path d="M4.5 2V7" stroke="#2a4aa0"/></svg>
<svg style="left:37px;top:618px" width="15" height="9" viewBox="0 0 15 9"><rect x="3.5" y="0.5" width="8" height="8" fill="#c8c8c8" stroke="#000" stroke-width="1.2"/><rect x="0" y="2" width="3" height="2" fill="#000"/><rect x="0" y="5" width="3" height="2" fill="#000"/><rect x="12" y="2" width="3" height="2" fill="#000"/><rect x="12" y="5" width="3" height="2" fill="#000"/></svg>
<div class="t" style="left:57px;top:616px">rst_controller_005</div>
<div class="a" style="left:31px;top:638px;width:6px;height:1px;background:repeating-linear-gradient(90deg,#a0a0a0 0 1px,transparent 1px 2px)"></div>
<svg style="left:21px;top:634px" width="9" height="9" viewBox="0 0 9 9"><defs><linearGradient id="pg" x1="0" y1="0" x2="0" y2="1"><stop offset="0" stop-color="#fff"/><stop offset="1" stop-color="#dcdcdc"/></linearGradient></defs><rect x="0.5" y="0.5" width="8" height="8" rx="1" fill="url(#pg)" stroke="#9a9a9a"/><path d="M2 4.5H7" stroke="#2a4aa0"/><path d="M4.5 2V7" stroke="#2a4aa0"/></svg>
<svg style="left:37px;top:634px" width="15" height="9" viewBox="0 0 15 9"><rect x="3.5" y="0.5" width="8" height="8" fill="#c8c8c8" stroke="#000" stroke-width="1.2"/><rect x="0" y="2" width="3" height="2" fill="#000"/><rect x="0" y="5" width="3" height="2" fill="#000"/><rect x="12" y="2" width="3" height="2" fill="#000"/><rect x="12" y="5" width="3" height="2" fill="#000"/></svg>
<div class="t" style="left:57px;top:632px">rst_controller_006</div>
<div class="a" style="left:31px;top:654px;width:6px;height:1px;background:repeating-linear-gradient(90deg,#a0a0a0 0 1px,transparent 1px 2px)"></div>
<svg style="left:21px;top:650px" width="9" height="9" viewBox="0 0 9 9"><defs><linearGradient id="pg" x1="0" y1="0" x2="0" y2="1"><stop offset="0" stop-color="#fff"/><stop offset="1" stop-color="#dcdcdc"/></linearGradient></defs><rect x="0.5" y="0.5" width="8" height="8" rx="1" fill="url(#pg)" stroke="#9a9a9a"/><path d="M2 4.5H7" stroke="#2a4aa0"/><path d="M4.5 2V7" stroke="#2a4aa0"/></svg>
<svg style="left:37px;top:650px" width="15" height="9" viewBox="0 0 15 9"><rect x="3.5" y="0.5" width="8" height="8" fill="#c8c8c8" stroke="#000" stroke-width="1.2"/><rect x="0" y="2" width="3" height="2" fill="#000"/><rect x="0" y="5" width="3" height="2" fill="#000"/><rect x="12" y="2" width="3" height="2" fill="#000"/><rect x="12" y="5" width="3" height="2" fill="#000"/></svg>
<div class="t" style="left:57px;top:648px">rst_controller_007</div>
<div class="a" style="left:31px;top:670px;width:6px;height:1px;background:repeating-linear-gradient(90deg,#a0a0a0 0 1px,transparent 1px 2px)"></div>
<svg style="left:21px;top:666px" width="9" height="9" viewBox="0 0 9 9"><defs><linearGradient id="pg" x1="0" y1="0" x2="0" y2="1"><stop offset="0" stop-color="#fff"/><stop offset="1" stop-color="#dcdcdc"/></linearGradient></defs><rect x="0.5" y="0.5" width="8" height="8" rx="1" fill="url(#pg)" stroke="#9a9a9a"/><path d="M2 4.5H7" stroke="#2a4aa0"/><path d="M4.5 2V7" stroke="#2a4aa0"/></svg>
<svg style="left:37px;top:666px" width="15" height="9" viewBox="0 0 15 9"><rect x="3.5" y="0.5" width="8" height="8" fill="#c8c8c8" stroke="#000" stroke-width="1.2"/><rect x="0" y="2" width="3" height="2" fill="#000"/><rect x="0" y="5" width="3" height="2" fill="#000"/><rect x="12" y="2" width="3" height="2" fill="#000"/><rect x="12" y="5" width="3" height="2" fill="#000"/></svg>
<div class="t" style="left:57px;top:664px">rst_controller_008</div>
<div class="a" style="left:31px;top:686px;width:6px;height:1px;background:repeating-linear-gradient(90deg,#a0a0a0 0 1px,transparent 1px 2px)"></div>
<svg style="left:21px;top:682px" width="9" height="9" viewBox="0 0 9 9"><defs><linearGradient id="pg" x1="0" y1="0" x2="0" y2="1"><stop offset="0" stop-color="#fff"/><stop offset="1" stop-color="#dcdcdc"/></linearGradient></defs><rect x="0.5" y="0.5" width="8" height="8" rx="1" fill="url(#pg)" stroke="#9a9a9a"/><path d="M2 4.5H7" stroke="#2a4aa0"/><path d="M4.5 2V7" stroke="#2a4aa0"/></svg>
<svg style="left:37px;top:682px" width="15" height="9" viewBox="0 0 15 9"><rect x="3.5" y="0.5" width="8" height="8" fill="#c8c8c8" stroke="#000" stroke-width="1.2"/><rect x="0" y="2" width="3" height="2" fill="#000"/><rect x="0" y="5" width="3" height="2" fill="#000"/><rect x="12" y="2" width="3" height="2" fill="#000"/><rect x="12" y="5" width="3" height="2" fill="#000"/></svg>
<div class="t" style="left:57px;top:680px">rst_controller_009</div>
<div class="a" style="left:261px;top:56px;width:500px;height:638px;background:#f5f5f5;border:1px solid #404040;border-radius:3px 0 0 0"></div>
<div class="a" style="left:262px;top:57px;width:145px;height:26px;background:linear-gradient(#5a5a5a,#7c7c7c 30%,#a6a6a6 60%,#d4d4d4 85%,#f5f5f5);border-top-left-radius:3px"></div>
<div class="a" style="left:406px;top:57px;width:348px;height:26px;border-left:1px solid #404040;border-bottom:1px solid #404040"></div>
<div class="a" style="left:505px;top:57px;width:1px;height:26px;background:#404040"></div>
<div class="a" style="left:695px;top:57px;width:1px;height:26px;background:#404040"></div>
<div class="t" style="left:291px;top:64px;color:#3a4250">System Contents</div>
<svg style="left:390px;top:64px" width="10" height="10" viewBox="0 0 10 10"><path d="M1.5 0.5H3L5 2.5L7 0.5H8.5L9.5 1.5V3L7.5 5L9.5 7V8.5L8.5 9.5H7L5 7.5L3 9.5H1.5L0.5 8.5V7L2.5 5L0.5 3V1.5Z" fill="none" stroke="#6a6a6a" stroke-width="1"/></svg>
<div class="t" style="left:418px;top:64px">Parameters</div>
<svg style="left:489px;top:64px" width="10" height="10" viewBox="0 0 10 10"><path d="M1.5 0.5H3L5 2.5L7 0.5H8.5L9.5 1.5V3L7.5 5L9.5 7V8.5L8.5 9.5H7L5 7.5L3 9.5H1.5L0.5 8.5V7L2.5 5L0.5 3V1.5Z" fill="none" stroke="#555" stroke-width="1"/></svg>
<div class="t" style="left:516px;top:64px">Memory-Mapped Interconnect</div>
<svg style="left:678px;top:64px" width="10" height="10" viewBox="0 0 10 10"><path d="M1.5 0.5H3L5 2.5L7 0.5H8.5L9.5 1.5V3L7.5 5L9.5 7V8.5L8.5 9.5H7L5 7.5L3 9.5H1.5L0.5 8.5V7L2.5 5L0.5 3V1.5Z" fill="none" stroke="#555" stroke-width="1"/></svg>
<svg style="left:266px;top:58px" width="22" height="22" viewBox="0 0 22 22"><rect x="11" y="4" width="1" height="16" fill="#b0c6e2"/><rect x="4" y="4" width="3" height="1" fill="#22405f"/><rect x="3" y="5" width="5" height="3" fill="#22405f"/><rect x="4" y="8" width="3" height="1" fill="#22405f"/><rect x="5" y="9" width="1" height="5" fill="#22405f"/><rect x="4" y="14" width="3" height="1" fill="#22405f"/><rect x="3" y="15" width="5" height="3" fill="#22405f"/><rect x="4" y="18" width="3" height="1" fill="#22405f"/><rect x="5" y="19" width="1" height="1" fill="#22405f"/><rect x="8" y="6" width="10" height="1" fill="#22405f"/><rect x="18" y="5" width="1" height="1" fill="#22405f"/><rect x="18" y="7" width="1" height="1" fill="#22405f"/><rect x="8" y="16" width="9" height="1" fill="#22405f"/><rect x="17" y="15" width="1" height="3" fill="#22405f"/><rect x="18" y="16" width="1" height="1" fill="#22405f"/><rect x="9" y="9" width="5" height="5" fill="#b0c6e2"/><rect x="14" y="11" width="3" height="1" fill="#b0c6e2"/><rect x="17" y="10" width="1" height="3" fill="#b0c6e2"/><rect x="18" y="11" width="1" height="1" fill="#b0c6e2"/><rect x="10" y="10" width="3" height="3" fill="#fff"/></svg>
<div class="a" style="left:294px;top:88px;width:18px;height:18px;border:1px solid #b4b8b8;border-radius:3px"></div>
<div class="a" style="left:318px;top:88px;width:18px;height:18px;border:1px solid #b4b8b8;border-radius:3px"></div>
<div class="a" style="left:342px;top:88px;width:18px;height:18px;border:1px solid #b4b8b8;border-radius:3px"></div>
<div class="t" style="left:365px;top:91px;font-weight:bold;font-size:11.7px">System:</div>
<div class="t" style="left:414px;top:91px;font-size:10.6px">custom_6g_4ch</div>
<div class="t" style="left:503px;top:91px;font-weight:bold;font-size:11.5px">Path:</div>
<div class="t" style="left:535px;top:91px">rst_controller</div>
<svg style="left:270px;top:114px" width="16" height="150" viewBox="0 0 16 150"><path d="M6 1H10V5H14V9H10V13H6V9H2V5H6Z" fill="#8a8a8a"/><path d="M2 27L4.5 27L8 30.5L11.5 27L14 27L14 29.5L10.5 33L14 36.5V39H11.5L8 35.5L4.5 39H2V36.5L5.5 33L2 29.5Z" fill="#8a8a8a"/><path d="M0 48Q0 47 1 47H14Q15 47 15 48V58Q15 59 14 59H9L5 62V59H1Q0 59 0 58Z" fill="#8a8a8a"/><path d="M2.5 50H5.5M2.5 52.5H5.5M2.5 55H5.5" stroke="#a8a8a8" stroke-width="1"/><path d="M7 58L14 50L16 52L9 60Z" fill="#9a9a9a" stroke="#b8b8b8" stroke-width=".7"/><path d="M2 76H14V79H2ZM8 79L14 85H2Z" fill="#8a8a8a"/><path d="M8 96.5L14 103.5H2Z" fill="#8a8a8a"/><path d="M2 118H14L8 125Z" fill="#8a8a8a"/><path d="M2 138H14L8 144ZM2 144H14V147H2Z" fill="#8a8a8a"/></svg>
<div class="a" style="left:268px;top:181px;width:1px;height:1px;background:#606060"></div>
<div class="a" style="left:293px;top:111px;width:461px;height:553px;background:#fff;border:1px solid #8c8ca0;border-right:none"></div>
<div class="a" style="left:294px;top:112px;width:460px;height:23px;background:linear-gradient(#ffffff 0,#ffffff 8px,#f8f8fe 9px,#f6f6fc 15px,#f5f5f5 16px);border-bottom:1px solid #d4d4d4"></div>
<div class="a" style="left:603px;top:114px;width:1px;height:20px;background:#dcdce4"></div>
<div class="t" style="left:609px;top:119px">Name</div>
<div class="a" style="left:294px;top:135px;width:460px;height:1px;background:#fff"></div>
<div class="a" style="left:294px;top:136px;width:460px;height:1px;background:#eee"></div>
<div class="a" style="left:294px;top:137px;width:460px;height:18px;background:#eeeeee"></div>
<svg style="left:610px;top:142px" width="9" height="9" viewBox="0 0 9 9"><rect x="0.5" y="0.5" width="8" height="8" fill="#fff" stroke="#000"/><path d="M2 4.5H7" stroke="#000"/></svg>
<svg style="left:623px;top:139px" width="14" height="14" viewBox="0 0 14 14"><rect x="0.5" y="2.5" width="3" height="7" fill="#d8d8d8" stroke="#000"/><rect x="4" y="5" width="1" height="2" fill="#000"/><rect x="5.5" y="1.5" width="8" height="8" fill="#c8c8c8" stroke="#000"/><rect x="7" y="0" width="3" height="1.5" fill="#000"/><rect x="10" y="10" width="2" height="1" fill="#000"/><rect x="2.5" y="11.5" width="11" height="2" fill="#e0e0e0" stroke="#000"/></svg>
<div class="t" style="left:641px;top:140px">mm_interconnect_0</div>
<div class="a" style="left:294px;top:155px;width:460px;height:18px;background:#eeeeee"></div>
<div class="t" style="left:634px;top:158px">clk_100_clk</div>
<div class="a" style="left:294px;top:163px;width:308px;height:1px;background:#000"></div>
<svg style="left:598px;top:160px" width="4" height="7" viewBox="0 0 4 7"><rect x="0" y="0" width="1" height="1" fill="#000"/><rect x="1" y="1" width="1" height="1" fill="#000"/><rect x="2" y="2" width="1" height="1" fill="#000"/><rect x="3" y="3" width="1" height="1" fill="#000"/><rect x="2" y="4" width="1" height="1" fill="#000"/><rect x="1" y="5" width="1" height="1" fill="#000"/><rect x="0" y="6" width="1" height="1" fill="#000"/><rect x="2" y="3" width="1" height="1" fill="#000"/></svg>
<div class="a" style="left:294px;top:173px;width:460px;height:18px;background:#eeeeee"></div>
<div class="t" style="left:634px;top:176px">data_pattern_genera<span style="font-weight:bold;letter-spacing:1px">...</span></div>
<div class="a" style="left:294px;top:181px;width:308px;height:1px;background:#000"></div>
<svg style="left:598px;top:178px" width="4" height="7" viewBox="0 0 4 7"><rect x="0" y="0" width="1" height="1" fill="#000"/><rect x="1" y="1" width="1" height="1" fill="#000"/><rect x="2" y="2" width="1" height="1" fill="#000"/><rect x="3" y="3" width="1" height="1" fill="#000"/><rect x="2" y="4" width="1" height="1" fill="#000"/><rect x="1" y="5" width="1" height="1" fill="#000"/><rect x="0" y="6" width="1" height="1" fill="#000"/><rect x="2" y="3" width="1" height="1" fill="#000"/></svg>
<div class="a" style="left:294px;top:191px;width:460px;height:18px;background:#eeeeee"></div>
<div class="t" style="left:634px;top:194px">master_0_clk_reset_r<span style="font-weight:bold;letter-spacing:1px">...</span></div>
<div class="a" style="left:294px;top:199px;width:308px;height:1px;background:#000"></div>
<svg style="left:598px;top:196px" width="4" height="7" viewBox="0 0 4 7"><rect x="0" y="0" width="1" height="1" fill="#000"/><rect x="1" y="1" width="1" height="1" fill="#000"/><rect x="2" y="2" width="1" height="1" fill="#000"/><rect x="3" y="3" width="1" height="1" fill="#000"/><rect x="2" y="4" width="1" height="1" fill="#000"/><rect x="1" y="5" width="1" height="1" fill="#000"/><rect x="0" y="6" width="1" height="1" fill="#000"/><rect x="2" y="3" width="1" height="1" fill="#000"/></svg>
<div class="a" style="left:294px;top:209px;width:460px;height:18px;background:#eeeeee"></div>
<div class="t" style="left:634px;top:212px">xcvr_custom_phy_0_<span style="font-weight:bold;letter-spacing:1px">...</span></div>
<div class="a" style="left:294px;top:217px;width:308px;height:1px;background:#000"></div>
<svg style="left:598px;top:214px" width="4" height="7" viewBox="0 0 4 7"><rect x="0" y="0" width="1" height="1" fill="#000"/><rect x="1" y="1" width="1" height="1" fill="#000"/><rect x="2" y="2" width="1" height="1" fill="#000"/><rect x="3" y="3" width="1" height="1" fill="#000"/><rect x="2" y="4" width="1" height="1" fill="#000"/><rect x="1" y="5" width="1" height="1" fill="#000"/><rect x="0" y="6" width="1" height="1" fill="#000"/><rect x="2" y="3" width="1" height="1" fill="#000"/></svg>
<div class="a" style="left:294px;top:227px;width:460px;height:18px;background:#eeeeee"></div>
<div class="t" style="left:634px;top:230px">master_0_master</div>
<div class="a" style="left:294px;top:235px;width:308px;height:1px;background:#000"></div>
<svg style="left:598px;top:232px" width="4" height="7" viewBox="0 0 4 7"><rect x="0" y="0" width="1" height="1" fill="#000"/><rect x="1" y="1" width="1" height="1" fill="#000"/><rect x="2" y="2" width="1" height="1" fill="#000"/><rect x="3" y="3" width="1" height="1" fill="#000"/><rect x="2" y="4" width="1" height="1" fill="#000"/><rect x="1" y="5" width="1" height="1" fill="#000"/><rect x="0" y="6" width="1" height="1" fill="#000"/><rect x="2" y="3" width="1" height="1" fill="#000"/></svg>
<div class="a" style="left:294px;top:245px;width:460px;height:18px;background:#eeeeee"></div>
<div class="t" style="left:634px;top:248px">alt_xcvr_reconfig_0_r<span style="font-weight:bold;letter-spacing:1px">...</span></div>
<div class="a" style="left:294px;top:253px;width:305px;height:1px;background:#000"></div>
<svg style="left:598px;top:250px" width="4" height="7" viewBox="0 0 4 7"><rect x="3" y="0" width="1" height="1" fill="#000"/><rect x="2" y="1" width="1" height="1" fill="#000"/><rect x="1" y="2" width="1" height="1" fill="#000"/><rect x="0" y="3" width="1" height="1" fill="#000"/><rect x="1" y="4" width="1" height="1" fill="#000"/><rect x="2" y="5" width="1" height="1" fill="#000"/><rect x="3" y="6" width="1" height="1" fill="#000"/></svg>
<div class="a" style="left:294px;top:263px;width:460px;height:18px;background:#eeeeee"></div>
<div class="t" style="left:634px;top:266px">data_pattern_checke<span style="font-weight:bold;letter-spacing:1px">...</span></div>
<div class="a" style="left:294px;top:271px;width:305px;height:1px;background:#000"></div>
<svg style="left:598px;top:268px" width="4" height="7" viewBox="0 0 4 7"><rect x="3" y="0" width="1" height="1" fill="#000"/><rect x="2" y="1" width="1" height="1" fill="#000"/><rect x="1" y="2" width="1" height="1" fill="#000"/><rect x="0" y="3" width="1" height="1" fill="#000"/><rect x="1" y="4" width="1" height="1" fill="#000"/><rect x="2" y="5" width="1" height="1" fill="#000"/><rect x="3" y="6" width="1" height="1" fill="#000"/></svg>
<div class="a" style="left:294px;top:281px;width:460px;height:18px;background:#eeeeee"></div>
<div class="t" style="left:634px;top:284px">data_pattern_checke<span style="font-weight:bold;letter-spacing:1px">...</span></div>
<div class="a" style="left:294px;top:289px;width:305px;height:1px;background:#000"></div>
<svg style="left:598px;top:286px" width="4" height="7" viewBox="0 0 4 7"><rect x="3" y="0" width="1" height="1" fill="#000"/><rect x="2" y="1" width="1" height="1" fill="#000"/><rect x="1" y="2" width="1" height="1" fill="#000"/><rect x="0" y="3" width="1" height="1" fill="#000"/><rect x="1" y="4" width="1" height="1" fill="#000"/><rect x="2" y="5" width="1" height="1" fill="#000"/><rect x="3" y="6" width="1" height="1" fill="#000"/></svg>
<div class="a" style="left:294px;top:299px;width:460px;height:18px;background:#eeeeee"></div>
<div class="t" style="left:634px;top:302px">data_pattern_checke<span style="font-weight:bold;letter-spacing:1px">...</span></div>
<div class="a" style="left:294px;top:307px;width:305px;height:1px;background:#000"></div>
<svg style="left:598px;top:304px" width="4" height="7" viewBox="0 0 4 7"><rect x="3" y="0" width="1" height="1" fill="#000"/><rect x="2" y="1" width="1" height="1" fill="#000"/><rect x="1" y="2" width="1" height="1" fill="#000"/><rect x="0" y="3" width="1" height="1" fill="#000"/><rect x="1" y="4" width="1" height="1" fill="#000"/><rect x="2" y="5" width="1" height="1" fill="#000"/><rect x="3" y="6" width="1" height="1" fill="#000"/></svg>
<div class="a" style="left:294px;top:317px;width:460px;height:18px;background:#eeeeee"></div>
<div class="t" style="left:634px;top:320px">data_pattern_checke<span style="font-weight:bold;letter-spacing:1px">...</span></div>
<div class="a" style="left:294px;top:325px;width:305px;height:1px;background:#000"></div>
<svg style="left:598px;top:322px" width="4" height="7" viewBox="0 0 4 7"><rect x="3" y="0" width="1" height="1" fill="#000"/><rect x="2" y="1" width="1" height="1" fill="#000"/><rect x="1" y="2" width="1" height="1" fill="#000"/><rect x="0" y="3" width="1" height="1" fill="#000"/><rect x="1" y="4" width="1" height="1" fill="#000"/><rect x="2" y="5" width="1" height="1" fill="#000"/><rect x="3" y="6" width="1" height="1" fill="#000"/></svg>
<div class="a" style="left:294px;top:335px;width:460px;height:18px;background:#eeeeee"></div>
<div class="t" style="left:634px;top:338px">data_pattern_genera<span style="font-weight:bold;letter-spacing:1px">...</span></div>
<div class="a" style="left:294px;top:343px;width:305px;height:1px;background:#000"></div>
<svg style="left:598px;top:340px" width="4" height="7" viewBox="0 0 4 7"><rect x="3" y="0" width="1" height="1" fill="#000"/><rect x="2" y="1" width="1" height="1" fill="#000"/><rect x="1" y="2" width="1" height="1" fill="#000"/><rect x="0" y="3" width="1" height="1" fill="#000"/><rect x="1" y="4" width="1" height="1" fill="#000"/><rect x="2" y="5" width="1" height="1" fill="#000"/><rect x="3" y="6" width="1" height="1" fill="#000"/></svg>
<div class="a" style="left:294px;top:353px;width:460px;height:18px;background:#eeeeee"></div>
<div class="t" style="left:634px;top:356px">data_pattern_genera<span style="font-weight:bold;letter-spacing:1px">...</span></div>
<div class="a" style="left:294px;top:361px;width:305px;height:1px;background:#000"></div>
<svg style="left:598px;top:358px" width="4" height="7" viewBox="0 0 4 7"><rect x="3" y="0" width="1" height="1" fill="#000"/><rect x="2" y="1" width="1" height="1" fill="#000"/><rect x="1" y="2" width="1" height="1" fill="#000"/><rect x="0" y="3" width="1" height="1" fill="#000"/><rect x="1" y="4" width="1" height="1" fill="#000"/><rect x="2" y="5" width="1" height="1" fill="#000"/><rect x="3" y="6" width="1" height="1" fill="#000"/></svg>
<div class="a" style="left:294px;top:371px;width:460px;height:18px;background:#eeeeee"></div>
<div class="t" style="left:634px;top:374px">data_pattern_genera<span style="font-weight:bold;letter-spacing:1px">...</span></div>
<div class="a" style="left:294px;top:379px;width:305px;height:1px;background:#000"></div>
<svg style="left:598px;top:376px" width="4" height="7" viewBox="0 0 4 7"><rect x="3" y="0" width="1" height="1" fill="#000"/><rect x="2" y="1" width="1" height="1" fill="#000"/><rect x="1" y="2" width="1" height="1" fill="#000"/><rect x="0" y="3" width="1" height="1" fill="#000"/><rect x="1" y="4" width="1" height="1" fill="#000"/><rect x="2" y="5" width="1" height="1" fill="#000"/><rect x="3" y="6" width="1" height="1" fill="#000"/></svg>
<div class="a" style="left:294px;top:389px;width:460px;height:18px;background:#eeeeee"></div>
<div class="t" style="left:634px;top:392px">data_pattern_genera<span style="font-weight:bold;letter-spacing:1px">...</span></div>
<div class="a" style="left:294px;top:397px;width:305px;height:1px;background:#000"></div>
<svg style="left:598px;top:394px" width="4" height="7" viewBox="0 0 4 7"><rect x="3" y="0" width="1" height="1" fill="#000"/><rect x="2" y="1" width="1" height="1" fill="#000"/><rect x="1" y="2" width="1" height="1" fill="#000"/><rect x="0" y="3" width="1" height="1" fill="#000"/><rect x="1" y="4" width="1" height="1" fill="#000"/><rect x="2" y="5" width="1" height="1" fill="#000"/><rect x="3" y="6" width="1" height="1" fill="#000"/></svg>
<div class="a" style="left:294px;top:407px;width:460px;height:18px;background:#eeeeee"></div>
<div class="t" style="left:634px;top:410px">xcvr_custom_phy_0_<span style="font-weight:bold;letter-spacing:1px">...</span></div>
<div class="a" style="left:294px;top:415px;width:305px;height:1px;background:#000"></div>
<svg style="left:598px;top:412px" width="4" height="7" viewBox="0 0 4 7"><rect x="3" y="0" width="1" height="1" fill="#000"/><rect x="2" y="1" width="1" height="1" fill="#000"/><rect x="1" y="2" width="1" height="1" fill="#000"/><rect x="0" y="3" width="1" height="1" fill="#000"/><rect x="1" y="4" width="1" height="1" fill="#000"/><rect x="2" y="5" width="1" height="1" fill="#000"/><rect x="3" y="6" width="1" height="1" fill="#000"/></svg>
<div class="a" style="left:294px;top:425px;width:460px;height:18px;background:#3399ff"></div>
<svg style="left:610px;top:430px" width="9" height="9" viewBox="0 0 9 9"><rect x="0.5" y="0.5" width="8" height="8" fill="#fff" stroke="#000"/><path d="M2 4.5H7" stroke="#000"/></svg>
<div class="t" style="left:626px;top:428px;color:#fff">rst_controller</div>
<div class="a" style="left:294px;top:443px;width:460px;height:18px;background:#ffffff"></div>
<div class="t" style="left:634px;top:446px">reset_in0</div>
<div class="a" style="left:294px;top:451px;width:308px;height:1px;background:#000"></div>
<svg style="left:598px;top:448px" width="4" height="7" viewBox="0 0 4 7"><rect x="0" y="0" width="1" height="1" fill="#000"/><rect x="1" y="1" width="1" height="1" fill="#000"/><rect x="2" y="2" width="1" height="1" fill="#000"/><rect x="3" y="3" width="1" height="1" fill="#000"/><rect x="2" y="4" width="1" height="1" fill="#000"/><rect x="1" y="5" width="1" height="1" fill="#000"/><rect x="0" y="6" width="1" height="1" fill="#000"/><rect x="2" y="3" width="1" height="1" fill="#000"/></svg>
<div class="a" style="left:294px;top:461px;width:460px;height:18px;background:#ffffff"></div>
<div class="t" style="left:634px;top:464px">reset_in1</div>
<div class="a" style="left:294px;top:469px;width:308px;height:1px;background:#000"></div>
<svg style="left:598px;top:466px" width="4" height="7" viewBox="0 0 4 7"><rect x="0" y="0" width="1" height="1" fill="#000"/><rect x="1" y="1" width="1" height="1" fill="#000"/><rect x="2" y="2" width="1" height="1" fill="#000"/><rect x="3" y="3" width="1" height="1" fill="#000"/><rect x="2" y="4" width="1" height="1" fill="#000"/><rect x="1" y="5" width="1" height="1" fill="#000"/><rect x="0" y="6" width="1" height="1" fill="#000"/><rect x="2" y="3" width="1" height="1" fill="#000"/></svg>
<div class="a" style="left:294px;top:479px;width:460px;height:18px;background:#ffffff"></div>
<div class="t" style="left:634px;top:482px">clk</div>
<div class="a" style="left:294px;top:487px;width:308px;height:1px;background:#000"></div>
<svg style="left:598px;top:484px" width="4" height="7" viewBox="0 0 4 7"><rect x="0" y="0" width="1" height="1" fill="#000"/><rect x="1" y="1" width="1" height="1" fill="#000"/><rect x="2" y="2" width="1" height="1" fill="#000"/><rect x="3" y="3" width="1" height="1" fill="#000"/><rect x="2" y="4" width="1" height="1" fill="#000"/><rect x="1" y="5" width="1" height="1" fill="#000"/><rect x="0" y="6" width="1" height="1" fill="#000"/><rect x="2" y="3" width="1" height="1" fill="#000"/></svg>
<div class="a" style="left:294px;top:497px;width:460px;height:18px;background:#ffffff"></div>
<div class="t" style="left:634px;top:500px">reset_out</div>
<div class="a" style="left:294px;top:505px;width:305px;height:1px;background:#000"></div>
<svg style="left:598px;top:502px" width="4" height="7" viewBox="0 0 4 7"><rect x="3" y="0" width="1" height="1" fill="#000"/><rect x="2" y="1" width="1" height="1" fill="#000"/><rect x="1" y="2" width="1" height="1" fill="#000"/><rect x="0" y="3" width="1" height="1" fill="#000"/><rect x="1" y="4" width="1" height="1" fill="#000"/><rect x="2" y="5" width="1" height="1" fill="#000"/><rect x="3" y="6" width="1" height="1" fill="#000"/></svg>
<div class="a" style="left:294px;top:515px;width:460px;height:18px;background:#3399ff"></div>
<svg style="left:610px;top:520px" width="9" height="9" viewBox="0 0 9 9"><rect x="0.5" y="0.5" width="8" height="8" fill="#fff" stroke="#000"/><path d="M2 4.5H7" stroke="#000"/></svg>
<div class="t" style="left:626px;top:518px;color:#fff">rst_controller_001</div>
<div class="a" style="left:294px;top:533px;width:460px;height:18px;background:#eeeeee"></div>
<div class="t" style="left:634px;top:536px">reset_in0</div>
<div class="a" style="left:294px;top:541px;width:308px;height:1px;background:#000"></div>
<svg style="left:598px;top:538px" width="4" height="7" viewBox="0 0 4 7"><rect x="0" y="0" width="1" height="1" fill="#000"/><rect x="1" y="1" width="1" height="1" fill="#000"/><rect x="2" y="2" width="1" height="1" fill="#000"/><rect x="3" y="3" width="1" height="1" fill="#000"/><rect x="2" y="4" width="1" height="1" fill="#000"/><rect x="1" y="5" width="1" height="1" fill="#000"/><rect x="0" y="6" width="1" height="1" fill="#000"/><rect x="2" y="3" width="1" height="1" fill="#000"/></svg>
<div class="a" style="left:294px;top:551px;width:460px;height:18px;background:#eeeeee"></div>
<div class="t" style="left:634px;top:554px">clk</div>
<div class="a" style="left:294px;top:559px;width:308px;height:1px;background:#000"></div>
<svg style="left:598px;top:556px" width="4" height="7" viewBox="0 0 4 7"><rect x="0" y="0" width="1" height="1" fill="#000"/><rect x="1" y="1" width="1" height="1" fill="#000"/><rect x="2" y="2" width="1" height="1" fill="#000"/><rect x="3" y="3" width="1" height="1" fill="#000"/><rect x="2" y="4" width="1" height="1" fill="#000"/><rect x="1" y="5" width="1" height="1" fill="#000"/><rect x="0" y="6" width="1" height="1" fill="#000"/><rect x="2" y="3" width="1" height="1" fill="#000"/></svg>
<div class="a" style="left:294px;top:569px;width:460px;height:18px;background:#eeeeee"></div>
<div class="t" style="left:634px;top:572px">reset_out</div>
<div class="a" style="left:294px;top:577px;width:305px;height:1px;background:#000"></div>
<svg style="left:598px;top:574px" width="4" height="7" viewBox="0 0 4 7"><rect x="3" y="0" width="1" height="1" fill="#000"/><rect x="2" y="1" width="1" height="1" fill="#000"/><rect x="1" y="2" width="1" height="1" fill="#000"/><rect x="0" y="3" width="1" height="1" fill="#000"/><rect x="1" y="4" width="1" height="1" fill="#000"/><rect x="2" y="5" width="1" height="1" fill="#000"/><rect x="3" y="6" width="1" height="1" fill="#000"/></svg>
<div class="a" style="left:294px;top:587px;width:460px;height:18px;background:#3399ff"></div>
<svg style="left:610px;top:592px" width="9" height="9" viewBox="0 0 9 9"><rect x="0.5" y="0.5" width="8" height="8" fill="#fff" stroke="#000"/><path d="M2 4.5H7" stroke="#000"/></svg>
<div class="t" style="left:626px;top:590px;color:#fff">rst_controller_002</div>
<div class="a" style="left:294px;top:605px;width:460px;height:18px;background:#ffffff"></div>
<div class="t" style="left:634px;top:608px">reset_in0</div>
<div class="a" style="left:294px;top:613px;width:308px;height:1px;background:#000"></div>
<svg style="left:598px;top:610px" width="4" height="7" viewBox="0 0 4 7"><rect x="0" y="0" width="1" height="1" fill="#000"/><rect x="1" y="1" width="1" height="1" fill="#000"/><rect x="2" y="2" width="1" height="1" fill="#000"/><rect x="3" y="3" width="1" height="1" fill="#000"/><rect x="2" y="4" width="1" height="1" fill="#000"/><rect x="1" y="5" width="1" height="1" fill="#000"/><rect x="0" y="6" width="1" height="1" fill="#000"/><rect x="2" y="3" width="1" height="1" fill="#000"/></svg>
<div class="a" style="left:294px;top:623px;width:460px;height:18px;background:#ffffff"></div>
<div class="t" style="left:634px;top:626px">clk</div>
<div class="a" style="left:294px;top:631px;width:308px;height:1px;background:#000"></div>
<svg style="left:598px;top:628px" width="4" height="7" viewBox="0 0 4 7"><rect x="0" y="0" width="1" height="1" fill="#000"/><rect x="1" y="1" width="1" height="1" fill="#000"/><rect x="2" y="2" width="1" height="1" fill="#000"/><rect x="3" y="3" width="1" height="1" fill="#000"/><rect x="2" y="4" width="1" height="1" fill="#000"/><rect x="1" y="5" width="1" height="1" fill="#000"/><rect x="0" y="6" width="1" height="1" fill="#000"/><rect x="2" y="3" width="1" height="1" fill="#000"/></svg>
<svg style="left:294px;top:628px" width="3" height="7" viewBox="0 0 3 7"><rect x="0" y="0" width="1" height="7" fill="#000"/><rect x="1" y="1" width="1" height="5" fill="#000"/><rect x="2" y="2" width="1" height="3" fill="#000"/></svg>
<div class="a" style="left:604px;top:137px;width:1px;height:510px;background:#8c8c8c"></div>
<div class="a" style="left:294px;top:647px;width:460px;height:16px;background:linear-gradient(#f0f0f0,#e8e8e8)"></div>
<svg style="left:299px;top:651px" width="5" height="7" viewBox="0 0 5 7"><path d="M4.5 0L0.5 3.5L4.5 7Z" fill="#404040"/></svg>
<div class="a" style="left:475px;top:647px;width:167px;height:15px;border:1px solid #9c9c9c;border-radius:2px;background:linear-gradient(#f8f8f8,#ececf0 40%,#d8d8de 80%,#e4e4e8)"></div>
<div class="a" style="left:554px;top:651px;width:7px;height:7px;background:repeating-linear-gradient(90deg,#404040 0 1px,transparent 1px 3px)"></div>
<svg style="left:295px;top:670px" width="16" height="16" viewBox="0 0 16 16"><rect width="7" height="16" fill="#e6e6dc"/><rect x="7" width="9" height="16" fill="#fff"/><path d="M0 9.5H2.5V5.5H5.5V9.5H10.5V7.5H12.5V9.5H14.5V7.5H16" stroke="#e8103c" fill="none" stroke-width="1.1"/><rect x="7" y="0" width="2" height="16" fill="#2848c0"/></svg>
<svg style="left:316px;top:670px" width="16" height="16" viewBox="0 0 16 16"><rect width="7" height="16" fill="#e6e6dc"/><rect x="7" width="9" height="16" fill="#fff"/><path d="M0 11.5H3.5V3.5H12.5V11.5H16" stroke="#e8103c" fill="none" stroke-width="1.1"/><path d="M3.5 5L1 8.5H6Z M12.5 10L10 6.5H15Z" fill="#e8103c"/><rect x="7" y="0" width="2" height="16" fill="#2848c0"/></svg>
<div class="a" style="left:337px;top:678px;width:1px;height:1px;background:#707070"></div>
<svg style="left:343px;top:671px" width="14" height="15" viewBox="0 0 14 15"><defs><linearGradient id="fn" x1="0" y1="0" x2="1" y2="0"><stop offset="0" stop-color="#f0f0f0"/><stop offset="1" stop-color="#a0a0a0"/></linearGradient></defs><path d="M0.5 2Q0.5 0.5 7 0.5Q13.5 0.5 13.5 2L8.5 8V14.5H5.5V8Z" fill="url(#fn)" stroke="#505050"/><path d="M2 2H12" stroke="#909090"/></svg>
<svg style="left:364px;top:671px" width="16" height="15" viewBox="0 0 16 15"><path d="M0 2Q0 0 7 0Q13 0 14 2L13 4L15 6L13 8.5L15 11L13 13.5L11 12L9.5 15H5V8Z" fill="#989898"/></svg>
<div class="t" style="left:386px;top:673px;font-weight:bold;font-size:11.9px">Current filter:</div>
<div class="a" style="left:146px;top:550px;width:285px;height:34px;background:#fdfde6;border:1px solid #000"></div>
<div class="t" style="left:150px;top:553px;font-weight:bold;font-size:11.5px">rst_controller_002</div>
<div class="t" style="left:157px;top:569px;font-size:11.5px">Merlin Reset Controller [altera_reset_controller 15.1]</div>
<svg style="left:144px;top:530px" width="13" height="19" viewBox="0 0 13 19"><path d="M0.5 0.5V16.5L4 13L6.5 18.5L9 17.5L6.5 12H11.5Z" fill="#fff" stroke="#000" stroke-linejoin="round"/></svg></body></html>
